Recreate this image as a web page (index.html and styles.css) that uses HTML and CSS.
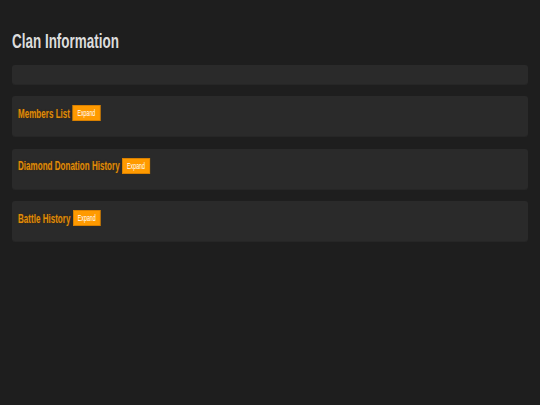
FILE: index.html
```html
<!DOCTYPE html>
<html>
<head>
<meta charset="utf-8">
<link rel="stylesheet" href="styles.css">
</head>
<body>
<h1 class="page-title"><span class="squeeze">Clan Information</span></h1>
<div class="panel panel-empty"></div>
<div class="panel">
  <div class="panel-head"><h3 class="panel-title">Members List</h3><button class="expand">Expand</button></div>
</div>
<div class="panel">
  <div class="panel-head"><h3 class="panel-title">Diamond Donation History</h3><button class="expand">Expand</button></div>
</div>
<div class="panel">
  <div class="panel-head"><h3 class="panel-title">Battle History</h3><button class="expand">Expand</button></div>
</div>
</body>
</html>
```
FILE: styles.css
```css
html, body {
  background: #1e1e1e;
}
body {
  margin: 0;
  padding: 30px 12px 12px;
  font-family: "Liberation Sans", Arial, sans-serif;
  display: flex;
  flex-direction: column;
  gap: 12.5px;
}
.page-title {
  margin: 0;
  font-size: 19.5px;
  line-height: 22px;
  font-weight: bold;
  color: #dcdcdc;
}
.squeeze {
  display: inline-block;
  transform: scaleX(0.69);
  transform-origin: left center;
}
.panel {
  background: #2a2a2a;
  border-radius: 3px;
  box-shadow: 0 1px 0 #262626;
  padding: 9px 6px 15px;
  height: 40px;
  box-sizing: border-box;
}
.panel-empty {
  height: 19px;
  padding: 0;
}
.panel-head {
  display: flex;
  align-items: center;
  gap: 4px;
  height: 16px;
  transform: scaleX(0.62);
  transform-origin: left center;
}
.panel-title {
  margin: 0;
  font-size: 13px;
  font-weight: bold;
  color: #e08c0c;
  text-shadow: 0 0 2px #4a3000;
}
.expand {
  font-family: "Liberation Sans", Arial, sans-serif;
  background: #ff9a00;
  border: 1px solid #d98000;
  color: #fff;
  font-size: 8.5px;
  height: 16px;
  padding: 0 7px;
  margin: 0;
  border-radius: 0;
  line-height: 14px;
}
```
